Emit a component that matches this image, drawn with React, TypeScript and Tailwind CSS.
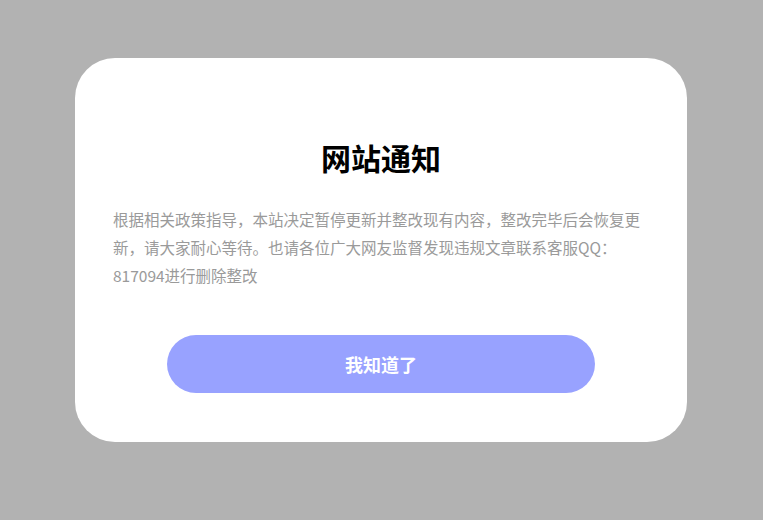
export default function App() {
  return (
    <div
      className="min-h-[520px] w-full bg-[#b2b2b2] flex pl-[75px] pt-[58px]"
      style={{ fontFamily: '"Noto Sans CJK SC", "Liberation Sans", sans-serif' }}
    >
      <div className="w-[612px] h-[384px] bg-white rounded-[40px] px-[38px] pt-[79px] flex flex-col items-center">
        {/* 标题 */}
        <h1 className="text-[30px] leading-[40px] font-bold text-black">网站通知</h1>

        {/* 通知内容 */}
        <p className="mt-[28px] w-full text-[15.5px] leading-[28px] text-[#9a9a9a]">
          根据相关政策指导，本站决定暂停更新并整改现有内容，整改完毕后会恢复更新，请大家耐心等待。也请各位广大网友监督发现违规文章联系客服QQ：817094进行删除整改
        </p>

        <button className="mt-[46px] w-[428px] h-[58px] rounded-full bg-[#98a2ff] text-white text-[18px] font-bold">
          我知道了
        </button>
      </div>
    </div>
  )
}
